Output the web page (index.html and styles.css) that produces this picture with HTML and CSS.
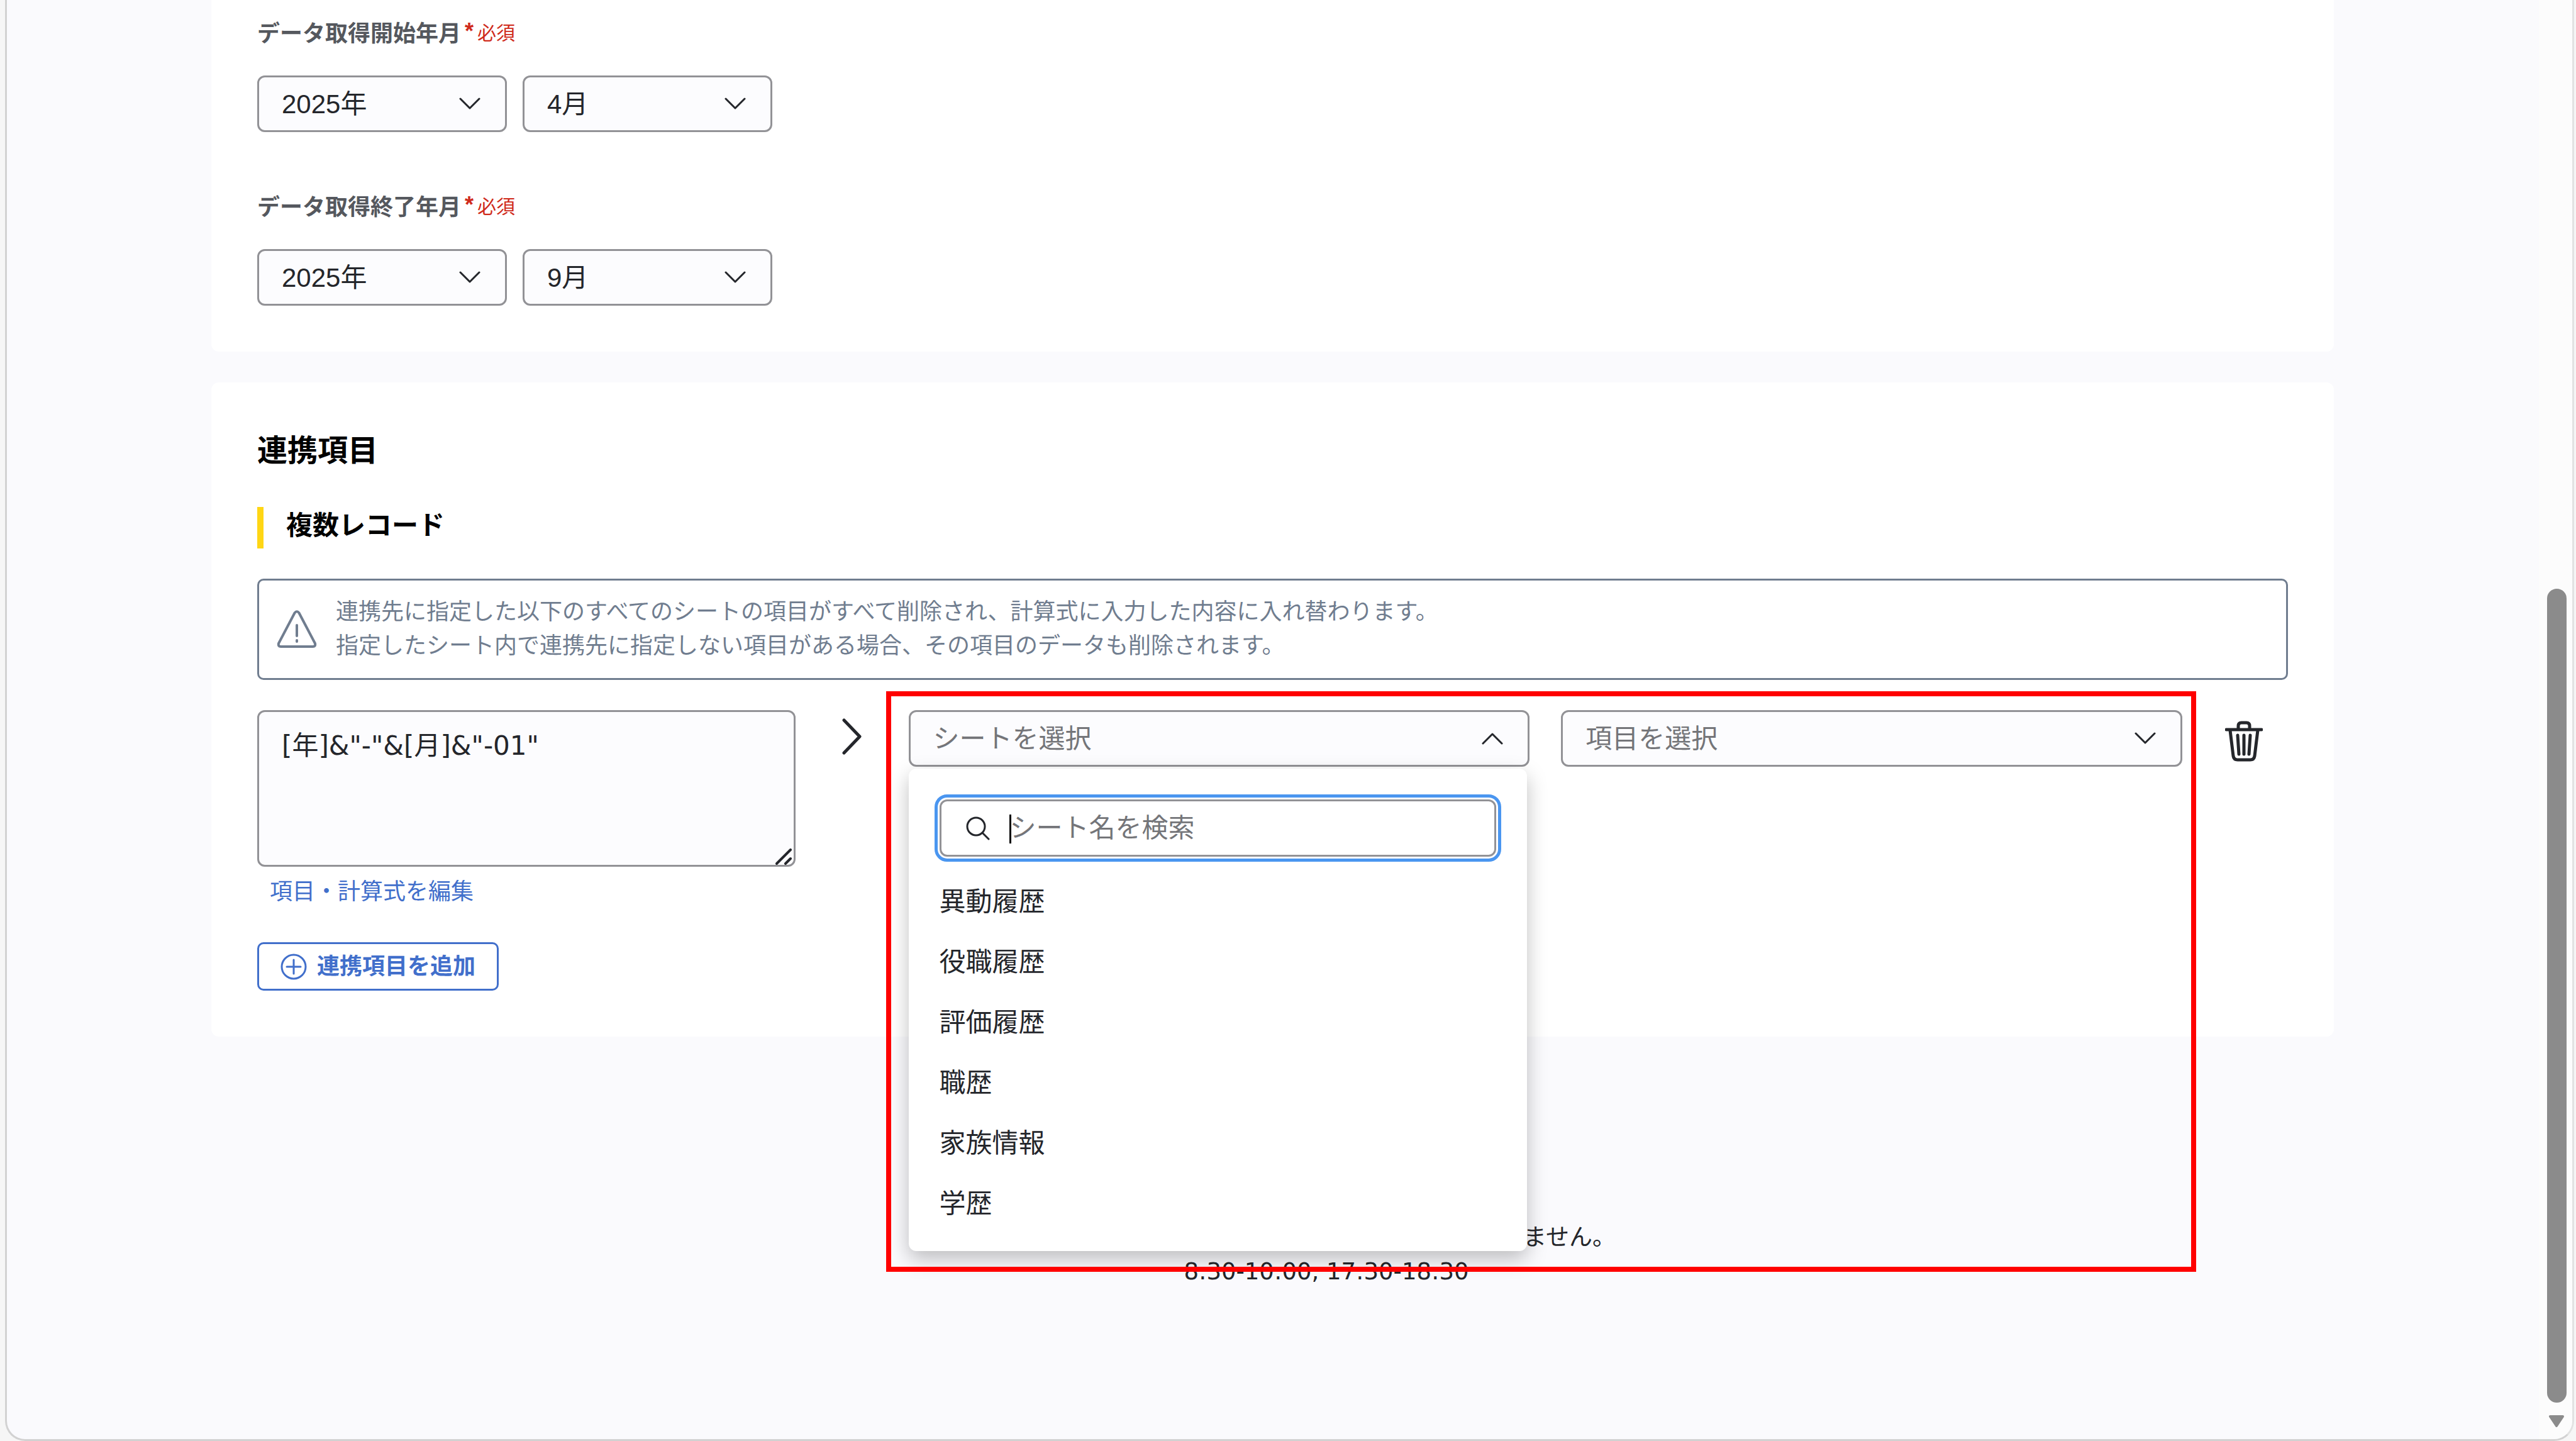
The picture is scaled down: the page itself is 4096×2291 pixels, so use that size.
FILE: index.html
```html
<!DOCTYPE html>
<html lang="ja">
<head>
<meta charset="utf-8">
<title>連携項目</title>
<link rel="stylesheet" href="styles.css">
</head>
<body>
<div class="window">
  <main class="page">
    <section class="card card-period">
      <div class="field">
        <label class="field-label" for="start-year">データ取得開始年月<span class="star">*</span><span class="required">必須</span></label>
        <div class="field-selects">
          <div class="select-wrap">
            <select id="start-year" class="select"><option>2025年</option></select>
            <svg class="chevron" viewBox="0 0 34 20"><path d="M2 2l15 15L32 2"/></svg>
          </div>
          <div class="select-wrap">
            <select class="select" aria-label="開始月"><option>4月</option></select>
            <svg class="chevron" viewBox="0 0 34 20"><path d="M2 2l15 15L32 2"/></svg>
          </div>
        </div>
      </div>
      <div class="field">
        <label class="field-label" for="end-year">データ取得終了年月<span class="star">*</span><span class="required">必須</span></label>
        <div class="field-selects">
          <div class="select-wrap">
            <select id="end-year" class="select"><option>2025年</option></select>
            <svg class="chevron" viewBox="0 0 34 20"><path d="M2 2l15 15L32 2"/></svg>
          </div>
          <div class="select-wrap">
            <select class="select" aria-label="終了月"><option>9月</option></select>
            <svg class="chevron" viewBox="0 0 34 20"><path d="M2 2l15 15L32 2"/></svg>
          </div>
        </div>
      </div>
    </section>

    <section class="card card-mapping">
      <h2 class="card-title">連携項目</h2>
      <h3 class="card-subtitle">複数レコード</h3>
      <div class="notice">
        <svg class="notice-icon" viewBox="0 0 64 60"><path d="M28.500 4.500Q32 0 35.500 4.500L61 53Q62 58 57.500 58H6.500Q2 58 3 53Z"/><path d="M32 24v17M32 48v2"/></svg>
        <p class="notice-text">連携先に指定した以下のすべてのシートの項目がすべて削除され、計算式に入力した内容に入れ替わります。<br>指定したシート内で連携先に指定しない項目がある場合、その項目のデータも削除されます。</p>
      </div>

      <div class="mapping">
        <div class="formula">
          <div class="formula-box">
            <textarea class="formula-input" aria-label="計算式">[年]&amp;"-"&amp;[月]&amp;"-01"</textarea>
            <svg class="grip" viewBox="0 0 26 26"><path d="M2 24L24 2M16 24l8-8"/></svg>
          </div>
          <a class="formula-link" href="#">項目・計算式を編集</a>
        </div>
        <svg class="arrow" viewBox="0 0 32 58"><path d="M3 3l25 26L3 55"/></svg>
        <div class="targets">
          <div class="select-wrap">
            <select class="select select-empty" aria-label="シート"><option>シートを選択</option></select>
            <svg class="chevron" viewBox="0 0 34 20"><path d="M2 18L17 3l15 15"/></svg>
            <div class="dropdown">
              <div class="search">
                <svg class="search-icon" viewBox="0 0 38 38"><circle cx="16" cy="16" r="14"/><path d="M26 26l10 10"/></svg>
                <span class="caret"></span>
                <input class="search-input" type="text" placeholder="シート名を検索" aria-label="シート名を検索">
              </div>
              <ul class="options">
                <li>異動履歴</li>
                <li>役職履歴</li>
                <li>評価履歴</li>
                <li>職歴</li>
                <li>家族情報</li>
                <li>学歴</li>
              </ul>
            </div>
          </div>
          <div class="select-wrap">
            <select class="select select-empty" aria-label="項目"><option>項目を選択</option></select>
            <svg class="chevron" viewBox="0 0 34 20"><path d="M2 2l15 15L32 2"/></svg>
          </div>
          <div class="highlight"></div>
        </div>
        <button class="delete" type="button" aria-label="削除">
          <svg viewBox="0 0 60 66"><path d="M2 15h56M21 14V9q0-5 5-5h8q5 0 5 5v5M8 16l5 41q1 6 7 6h20q6 0 7-6l5-41M20 24l2 30M30 24v30M40 24l-2 30"/></svg>
        </button>
      </div>

      <button class="add" type="button">
        <svg class="add-icon" viewBox="0 0 42 42"><circle cx="21" cy="21" r="19"/><path d="M21 10v22M10 21h22"/></svg>
        <span class="add-text">連携項目を追加</span>
      </button>
    </section>

    <footer class="footer">
      <p class="footer-note">ません。</p>
      <p class="footer-hours">8:30-10:00, 17:30-18:30</p>
    </footer>
  </main>
  <div class="scrollbar">
    <div class="thumb"></div>
    <svg class="scroll-down" viewBox="0 0 26 20"><path d="M3 2h20L13 17z"/></svg>
  </div>
</div>
</body>
</html>
```
FILE: styles.css
```css
* {
  box-sizing: border-box;
}

body {
  margin: 0;
  background: #f6f6f6;
  color: #24262b;
  font-family: "Liberation Sans", "Noto Sans CJK JP", sans-serif;
  font-size: 42px;
}

h2, h3, p, ul {
  margin: 0;
  padding: 0;
}

svg {
  display: block;
  fill: none;
  stroke: currentColor;
  stroke-linecap: round;
  stroke-linejoin: round;
}

.window {
  display: grid;
  grid-template-columns: 1fr 53px;
  min-height: 100vh;
  margin: 0 3px 0 8px;
  overflow: hidden;
  border: 3px solid #d2d2d2;
  border-top: 0;
  border-right-color: #e2e2e2;
  border-radius: 0 0 32px 32px;
  background: #fafafd;
}

.page {
  display: flex;
  flex-direction: column;
  gap: 49px;
  padding: 0 326px 0 325px;
}

.card {
  padding: 0 73px 73px;
  background: #ffffff;
}

.card-period {
  display: flex;
  flex-direction: column;
  gap: 74px;
  padding-top: 8px;
  border-radius: 0 0 12px 12px;
}

.field {
  display: flex;
  flex-direction: column;
  gap: 28px;
}

.field-label {
  display: flex;
  align-items: center;
  height: 84px;
  color: #55585e;
  font-size: 36px;
  font-weight: 700;
}

.star {
  width: 26px;
  color: #cf2a1b;
  text-align: center;
}

.required {
  color: #cf2a1b;
  font-size: 30px;
  font-weight: 400;
}

.field-selects {
  display: grid;
  grid-template-columns: 397px 397px;
  gap: 25px;
}

.select-wrap {
  position: relative;
}

.select {
  display: block;
  width: 100%;
  height: 90px;
  padding: 0 100px 0 36px;
  border: 3px solid #929296;
  border-radius: 12px;
  background: #fcfcfe;
  color: #24262b;
  font: inherit;
  appearance: none;
}

.select-empty {
  color: #747579;
}

.chevron {
  position: absolute;
  top: 35px;
  right: 42px;
  width: 34px;
  height: 20px;
  stroke-width: 3;
  pointer-events: none;
}

.card-mapping {
  padding-top: 76px;
  border-radius: 12px;
}

.card-title {
  color: #000000;
  font-size: 48px;
  line-height: 66px;
}

.card-subtitle {
  margin-top: 56px;
  padding: 3px 0 9px 36px;
  border-left: 10px solid #ffd614;
  color: #000000;
  font-size: 42px;
  line-height: 54px;
}

.notice {
  display: flex;
  align-items: center;
  gap: 30px;
  margin-top: 48px;
  padding: 23px 28px 24px;
  border: 3px solid #707d8f;
  border-radius: 10px;
  color: #707d8f;
}

.notice-icon {
  width: 64px;
  height: 60px;
  stroke-width: 4;
}

.notice-text {
  font-size: 36px;
  line-height: 54px;
}

.mapping {
  display: grid;
  grid-template-columns: 855fr 180px 2024fr 168px;
  margin-top: 48px;
}

.formula-box {
  position: relative;
}

.formula-input {
  display: block;
  width: 100%;
  height: 249px;
  padding: 24px 36px;
  border: 3px solid #929296;
  border-radius: 12px;
  background: #fcfcfe;
  color: #24262b;
  font-family: "DejaVu Sans", "Noto Sans CJK JP", sans-serif;
  font-size: 42px;
  line-height: 60px;
  resize: none;
}

.grip {
  position: absolute;
  right: 6px;
  bottom: 3px;
  width: 26px;
  height: 26px;
  stroke-width: 4;
}

.formula-link {
  display: block;
  padding: 13px 20px 10px;
  color: #416fcb;
  font-size: 36px;
  line-height: 54px;
  text-decoration: none;
}

.arrow {
  width: 32px;
  height: 58px;
  margin: 13px auto 0;
  stroke-width: 5;
}

.targets {
  position: relative;
  display: grid;
  grid-template-columns: 1fr 1fr;
  gap: 50px;
  align-items: start;
}

.dropdown {
  position: absolute;
  top: 93px;
  left: 0;
  right: 4px;
  z-index: 1;
  padding: 49px 49px 27px;
  border-radius: 12px;
  background: #ffffff;
  box-shadow: 0 12px 32px rgba(0, 0, 0, 0.25);
}

.search {
  position: relative;
}

.search-icon {
  position: absolute;
  top: 27px;
  left: 42px;
  width: 38px;
  height: 38px;
  stroke-width: 3;
}

.caret {
  position: absolute;
  top: 24px;
  left: 111px;
  width: 3px;
  height: 46px;
  background: #000000;
}

.search-input {
  display: block;
  width: 100%;
  height: 91px;
  padding: 0 30px 0 109px;
  border: 3px solid #929296;
  border-radius: 12px;
  outline: 5px solid #4a96f0;
  outline-offset: 3px;
  background: #ffffff;
  font: inherit;
}

.search-input::placeholder {
  color: #747579;
}

.options {
  margin-top: 24px;
  list-style: none;
  line-height: 96px;
}

.highlight {
  position: absolute;
  top: -30px;
  left: -36px;
  right: -22px;
  z-index: 2;
  height: 923px;
  border: 8px solid #ff0000;
  pointer-events: none;
}

.delete {
  justify-self: center;
  width: 60px;
  height: 66px;
  margin: 16px 0 0 28px;
  padding: 0;
  border: 0;
  background: none;
  color: #24262b;
}

.delete svg {
  width: 60px;
  height: 66px;
  stroke-width: 5;
}

.add {
  display: flex;
  align-items: center;
  gap: 16px;
  height: 77px;
  margin-top: 43px;
  padding: 0 34px;
  border: 3px solid #416fcb;
  border-radius: 10px;
  background: #ffffff;
  color: #416fcb;
  font: inherit;
  font-size: 36px;
  font-weight: 700;
}

.add-icon {
  width: 42px;
  height: 42px;
  stroke-width: 3;
}

.add-text {
  padding-bottom: 8px;
}

.footer {
  align-self: center;
  width: 920px;
  margin: 244px 0 0 171px;
  font-family: "DejaVu Sans", "Noto Sans CJK JP", sans-serif;
  font-size: 37px;
  line-height: 54px;
}

.footer-note {
  text-align: right;
}

.footer-hours {
  text-align: center;
}

.scrollbar {
  display: flex;
  flex-direction: column;
  align-items: center;
  justify-content: flex-end;
  gap: 20px;
  padding: 0 0 18px 3px;
  background: #fcfcfc;
}

.thumb {
  width: 31px;
  height: 57%;
  border-radius: 16px;
  background: #8b8b8b;
}

.scroll-down {
  width: 26px;
  height: 20px;
  fill: #8b8b8b;
  stroke: #8b8b8b;
  stroke-width: 4;
}
```
